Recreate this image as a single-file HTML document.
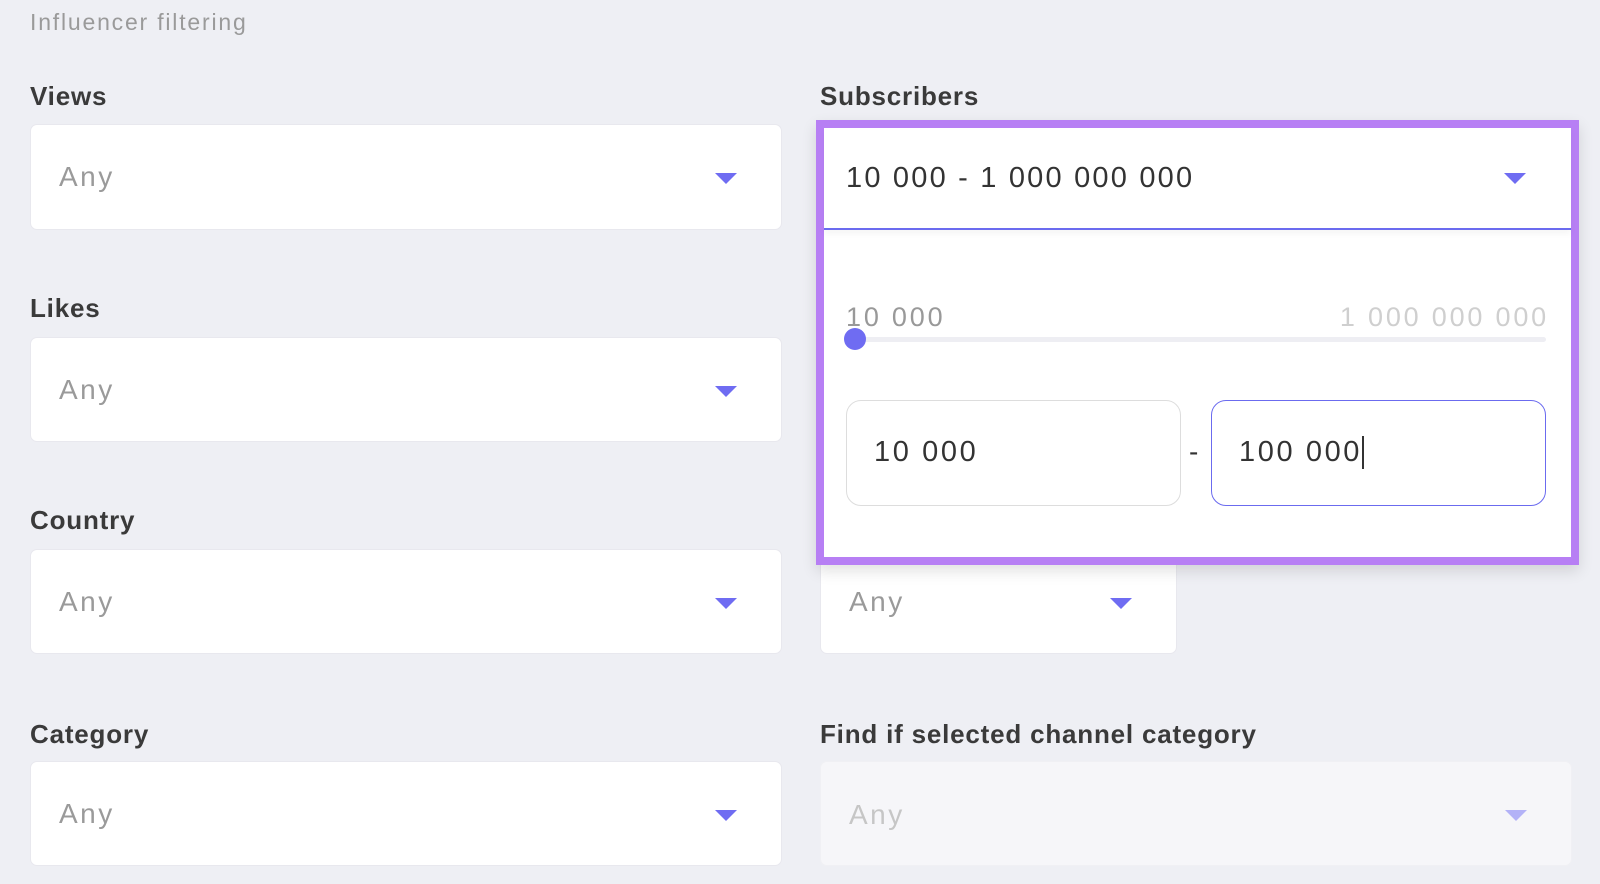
<!DOCTYPE html>
<html><head><style>
*{margin:0;padding:0;box-sizing:border-box}
body{width:1600px;height:884px;background:#eeeff4;font-family:"Liberation Sans",sans-serif;position:relative;overflow:hidden}
.a{position:absolute}
.title{left:30px;top:9px;font-size:23px;color:#9a9a9a;letter-spacing:1.8px}
.lbl{font-size:26px;color:#3a3a3a;letter-spacing:.8px;font-weight:bold}
.box{background:#fff;border-radius:7px;border:1px solid #e8e8ee}
.any{font-size:28px;color:#9a9a9a;position:absolute;left:28px;top:50%;transform:translateY(-50%);letter-spacing:2.5px}
.arr{position:absolute;width:0;height:0;border-left:11px solid transparent;border-right:11px solid transparent;border-top:11px solid #6f6cf2}
</style></head><body>
<div class="a title">Influencer filtering</div>

<div class="a lbl" style="left:30px;top:81px">Views</div>
<div class="a lbl" style="left:30px;top:293px">Likes</div>
<div class="a lbl" style="left:30px;top:505px">Country</div>
<div class="a lbl" style="left:30px;top:719px">Category</div>
<div class="a lbl" style="left:820px;top:81px">Subscribers</div>
<div class="a lbl" style="left:820px;top:719px">Find if selected channel category</div>

<div class="a box" style="left:30px;top:124px;width:752px;height:106px"><span class="any">Any</span><div class="arr" style="left:684px;top:48px"></div></div>
<div class="a box" style="left:30px;top:337px;width:752px;height:105px"><span class="any">Any</span><div class="arr" style="left:684px;top:48px"></div></div>
<div class="a box" style="left:30px;top:549px;width:752px;height:105px"><span class="any">Any</span><div class="arr" style="left:684px;top:48px"></div></div>
<div class="a box" style="left:30px;top:761px;width:752px;height:105px"><span class="any">Any</span><div class="arr" style="left:684px;top:48px"></div></div>

<div class="a box" style="left:820px;top:549px;width:357px;height:105px"><span class="any">Any</span><div class="arr" style="left:289px;top:48px"></div></div>
<div class="a box" style="left:820px;top:761px;width:752px;height:105px;background:#f6f6f9;border-color:#f0f0f4"><span class="any" style="color:#c6c6c6;top:51%">Any</span><div class="arr" style="left:684px;top:48px;border-top-color:#b3b2f7"></div></div>

<div class="a" style="left:816px;top:120px;width:763px;height:445px;border:8px solid #b77ff4;background:#fff;box-shadow:0 6px 14px rgba(0,0,0,.12)">
  <div class="a" style="left:0;top:0;width:747px;height:102px;border-bottom:2px solid #6b6bef;box-shadow:0 4px 6px rgba(0,0,0,.04)">
    <div class="a" style="left:22px;top:34px;font-size:29px;color:#333;letter-spacing:2.2px">10 000 - 1 000 000 000</div>
    <div class="arr" style="left:680px;top:45px"></div>
  </div>
  <div class="a" style="left:22px;top:174px;font-size:27px;color:#999;letter-spacing:2.8px">10 000</div>
  <div class="a" style="right:22px;top:174px;font-size:27px;color:#cfcfcf;letter-spacing:2.8px">1 000 000 000</div>
  <div class="a" style="left:22px;top:209px;width:700px;height:5px;background:#eeeef3;border-radius:3px"></div>
  <div class="a" style="left:20px;top:200px;width:22px;height:22px;border-radius:50%;background:#6f6cf2"></div>
  <div class="a" style="left:22px;top:272px;width:335px;height:106px;border:1.5px solid #ddd;border-radius:15px"><span class="a" style="left:27px;top:35px;font-size:29px;color:#333;letter-spacing:2.6px">10 000</span></div>
  <div class="a" style="left:365px;top:308px;font-size:28px;color:#333">-</div>
  <div class="a" style="left:387px;top:272px;width:335px;height:106px;border:1.5px solid #6b6bef;border-radius:15px"><span class="a" style="left:27px;top:35px;font-size:29px;color:#333;letter-spacing:2.6px;border-right:2px solid #333;padding-right:0">100 000</span></div>
</div>
</body></html>
